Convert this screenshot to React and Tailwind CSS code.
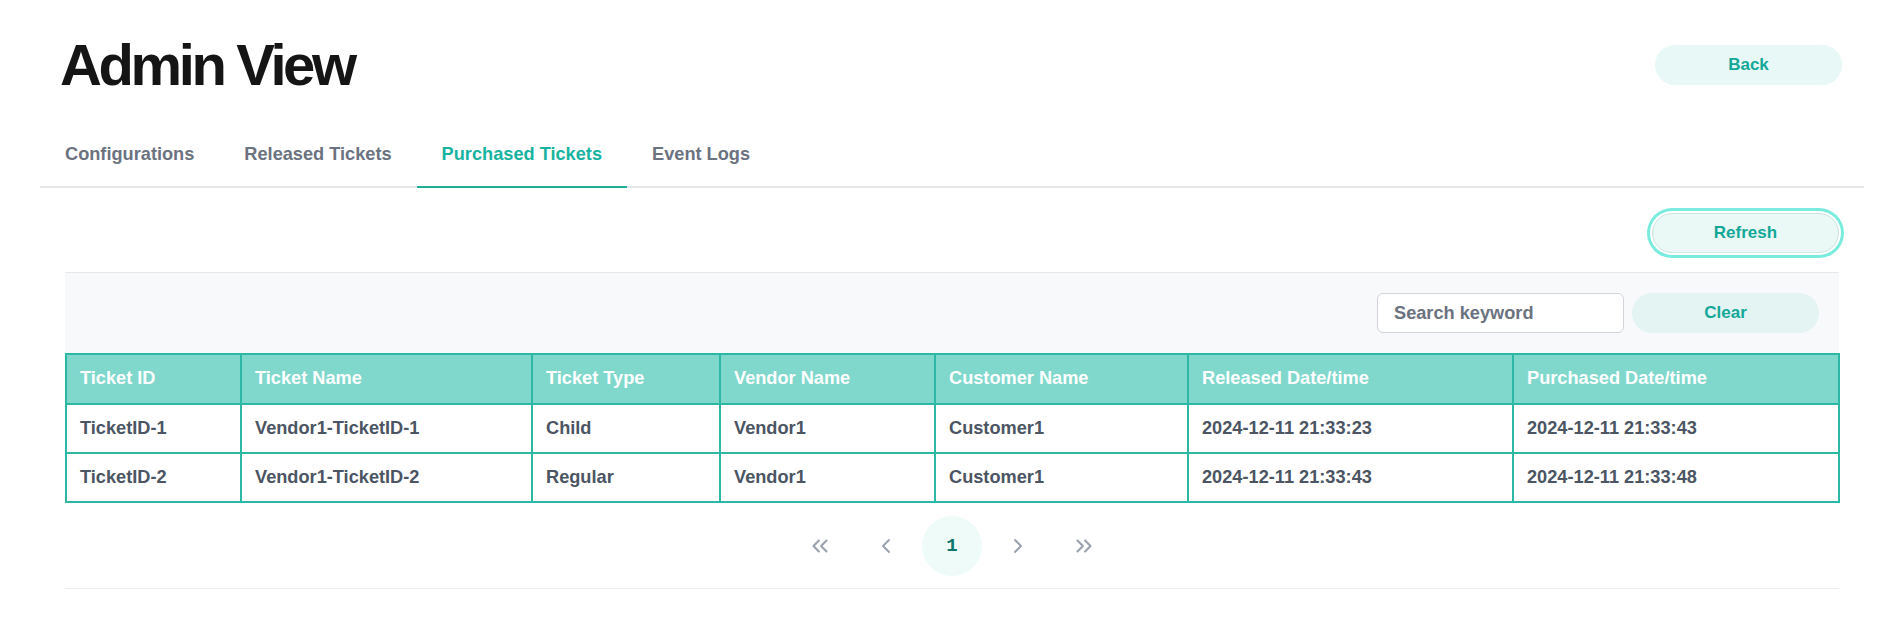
import React, { useState } from 'react';
import { ChevronsLeft, ChevronLeft, ChevronRight, ChevronsRight } from 'lucide-react';

const TABS = ['Configurations', 'Released Tickets', 'Purchased Tickets', 'Event Logs'];

const COLUMNS = [
  { key: 'id', label: 'Ticket ID', w: 'w-[175px]' },
  { key: 'name', label: 'Ticket Name', w: 'w-[291px]' },
  { key: 'type', label: 'Ticket Type', w: 'w-[188px]' },
  { key: 'vendor', label: 'Vendor Name', w: 'w-[215px]' },
  { key: 'customer', label: 'Customer Name', w: 'w-[253px]' },
  { key: 'released', label: 'Released Date/time', w: 'w-[325px]' },
  { key: 'purchased', label: 'Purchased Date/time', w: 'w-[326px]' },
];

const ROWS = [
  { id: 'TicketID-1', name: 'Vendor1-TicketID-1', type: 'Child', vendor: 'Vendor1', customer: 'Customer1', released: '2024-12-11 21:33:23', purchased: '2024-12-11 21:33:43' },
  { id: 'TicketID-2', name: 'Vendor1-TicketID-2', type: 'Regular', vendor: 'Vendor1', customer: 'Customer1', released: '2024-12-11 21:33:43', purchased: '2024-12-11 21:33:48' },
];

export default function App() {
  const [tab, setTab] = useState('Purchased Tickets');
  const [q, setQ] = useState('');

  const rows = ROWS.filter(r => !q || Object.values(r).some(v => v.toLowerCase().includes(q.toLowerCase())));

  return (
    <div className="min-h-screen bg-white pl-[40px] pr-[31px] font-['Liberation_Sans',Arial,sans-serif]">
      {/* header */}
      <div className="flex items-center justify-between pl-[20px] pr-[22px] pt-[36px]">
        <h1 className="text-[58px] leading-[58px] font-bold tracking-[-3.4px] text-[#151515]">Admin View</h1>
        <button className="w-[187px] h-[40px] rounded-full bg-[#e8f8f6] text-[17px] font-bold text-[#14a898]">Back</button>
      </div>

      {/* tabs */}
      <div className="mt-[25px] flex border-b-2 border-[#e5e7eb]">
        {TABS.map(t => (
          <button
            key={t}
            onClick={() => setTab(t)}
            className={
              t === tab
                ? 'px-[25px] pt-[21px] pb-[18px] -mb-[2px] border-b-2 border-[#1fae98] text-[18.2px] leading-7 font-bold text-[#17b3a0]'
                : 'px-[25px] pt-[21px] pb-[18px] -mb-[2px] border-b-2 border-transparent text-[18.2px] leading-7 font-bold text-[#6b7280]'
            }
          >
            {t}
          </button>
        ))}
      </div>

      <div className="px-[25px]">
        <div className="flex justify-end pt-[25px] pb-[19px]">
          <button className="w-[187px] h-[40px] rounded-full bg-[#eaf8f6] border border-[#cfe3e0] ring-[3px] ring-[#79ecdd] ring-offset-2 text-[17px] font-bold text-[#14a898]">Refresh</button>
        </div>

        <div className="bg-[#f8f9fb] border-t border-[#e5e7eb]">
          <div className="flex justify-end gap-2 p-5">
            <input
              value={q}
              onChange={e => setQ(e.target.value)}
              placeholder="Search keyword"
              className="w-[247px] h-[40px] rounded-md border border-[#d1d5db] bg-white px-4 text-[18.2px] font-bold text-[#374151] placeholder:text-[#6b7280] outline-none"
            />
            <button onClick={() => setQ('')} className="w-[187px] h-[40px] rounded-full bg-[#e3f4f3] text-[17px] font-bold text-[#14a898]">Clear</button>
          </div>

          <table className="w-full table-fixed border-collapse">
            <thead>
              <tr className="h-[50px] bg-[#80d8cd]">
                {COLUMNS.map(c => (
                  <th key={c.key} className={`${c.w} border-2 border-[#2db8a5] px-[13px] text-left text-[18.2px] font-bold text-white`}>{c.label}</th>
                ))}
              </tr>
            </thead>
            <tbody className="bg-white">
              {rows.map(r => (
                <tr key={r.id} className="h-[49px]">
                  {COLUMNS.map(c => (
                    <td key={c.key} className="border-2 border-[#2db8a5] px-[13px] text-[18.2px] font-bold text-[#4b5563]">{r[c.key]}</td>
                  ))}
                </tr>
              ))}
            </tbody>
          </table>
        </div>

        {/* pagination */}
        <div className="flex items-center justify-center gap-[6px] pt-[13px] pb-[12px] border-b border-[#eeeeee]">
          <button className="w-[60px] h-[60px] flex items-center justify-center text-[#9ca3af]"><ChevronsLeft className="w-[26px] h-[26px]" strokeWidth={2} /></button>
          <button className="w-[60px] h-[60px] flex items-center justify-center text-[#9ca3af]"><ChevronLeft className="w-[24px] h-[24px]" strokeWidth={2} /></button>
          <button className="w-[60px] h-[60px] rounded-full bg-[#effbf8] flex items-center justify-center text-[19px] font-bold text-[#0f766e] font-['Liberation_Mono',monospace]">1</button>
          <button className="w-[60px] h-[60px] flex items-center justify-center text-[#9ca3af]"><ChevronRight className="w-[24px] h-[24px]" strokeWidth={2} /></button>
          <button className="w-[60px] h-[60px] flex items-center justify-center text-[#9ca3af]"><ChevronsRight className="w-[26px] h-[26px]" strokeWidth={2} /></button>
        </div>
      </div>
    </div>
  );
}
